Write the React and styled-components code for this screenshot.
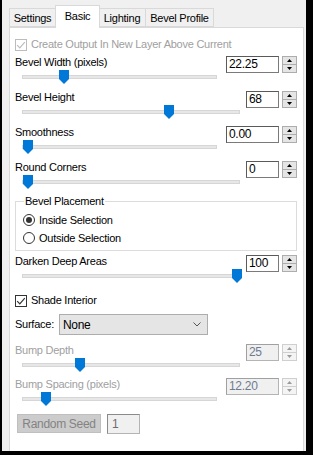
import styled, { createGlobalStyle } from "styled-components";

const Global = createGlobalStyle`
  html, body {
    margin: 0;
    padding: 0;
    background: #000;
  }
  body {
    font-family: "Liberation Sans", Arial, sans-serif;
    font-size: 11px;
    letter-spacing: -0.25px;
    color: #000;
  }
`;

const Frame = styled.div`
  width: 313px;
  height: 455px;
  box-sizing: border-box;
  background: #f0f0f0;
  border-left: 2px solid #000;
  border-right: 7px solid #000;
  border-bottom: 4px solid #000;
  display: flex;
  flex-direction: column;
`;

const Tabs = styled.div`
  display: flex;
  align-items: flex-end;
  padding: 5px 0 0 7px;
  position: relative;
  z-index: 1;
`;

const Tab = styled.div`
  width: ${(p) => p.$w}px;
  height: ${(p) => (p.$active ? 23 : 19)}px;
  box-sizing: border-box;
  display: flex;
  align-items: ${(p) => (p.$active ? "flex-start" : "center")};
  padding-top: ${(p) => (p.$active ? 4 : 0)}px;
  justify-content: center;
  background: ${(p) => (p.$active ? "#fff" : "#f0f0f0")};
  border: 1px solid #d9d9d9;
  border-bottom: ${(p) => (p.$active ? "none" : "1px solid #d9d9d9")};
  margin: 0 ${(p) => (p.$active ? -1 : 0)}px ${(p) => (p.$active ? -1 : 0)}px;
  border-left-width: ${(p) => (p.$first ? 1 : 0)}px;
  ${(p) => p.$active && "border-left-width: 1px; position: relative; z-index: 2;"}
`;

const Panel = styled.div`
  flex: 1;
  margin: 0 2px 0 7px;
  background: #fff;
  border: 1px solid #d9d9d9;
  border-bottom: none;
  padding: 0 6px 0 5px;
  display: flex;
  flex-direction: column;
`;

const CheckRow = styled.label`
  display: flex;
  align-items: center;
  gap: 4px;
  line-height: 15px;
  height: 15px;
  margin-top: ${(p) => p.$mt}px;
  color: ${(p) => (p.$disabled ? "#a0a0a0" : "#000")};
`;

const Box = styled.span`
  width: 12px;
  height: 12px;
  box-sizing: border-box;
  border: 1px solid ${(p) => (p.$disabled ? "#bcbcbc" : "#333")};
  background: #fff;
  display: flex;
  align-items: center;
  justify-content: center;
`;

const Control = styled.div`
  display: grid;
  grid-template-columns: 1fr auto;
  grid-template-rows: 15px 14px;
  margin-top: ${(p) => p.$mt}px;
`;

const Label = styled.div`
  line-height: 15px;
  color: ${(p) => (p.$disabled ? "#a0a0a0" : "#000")};
  white-space: nowrap;
`;

const SliderRow = styled.div`
  grid-row: 2;
  grid-column: 1;
  padding-left: 7px;
`;

const Track = styled.div`
  position: relative;
  width: ${(p) => p.$w}px;
  height: 4px;
  box-sizing: border-box;
  margin-top: 5px;
  background: #e7e7e7;
  border: 1px solid #d6d6d6;
`;

const Thumb = styled.svg`
  position: absolute;
  top: -6px;
  display: block;
`;

const Spin = styled.div`
  grid-column: 2;
  grid-row: 1 / span 2;
  align-self: start;
  margin-top: 1px;
  display: flex;
  gap: 3px;
`;

const SpinInput = styled.div`
  width: ${(p) => p.$w}px;
  height: 17px;
  box-sizing: border-box;
  border: 1px solid ${(p) => (p.$disabled ? "#b4b4b4" : "#7a7a7a")};
  border-top-color: ${(p) => (p.$disabled ? "#a0a0a0" : "#5a5a5a")};
  border-left-color: ${(p) => (p.$disabled ? "#a0a0a0" : "#5a5a5a")};
  background: ${(p) => (p.$disabled ? "#f0f0f0" : "#fff")};
  color: ${(p) => (p.$disabled ? "#6d7a90" : "#000")};
  font-size: 12px;
  letter-spacing: -0.3px;
  line-height: 15px;
  padding-left: 2px;
`;

const SpinButtons = styled.div`
  display: flex;
  flex-direction: column;
  width: 15px;
  height: 17px;
`;

const SpinButton = styled.div`
  flex: 1;
  box-sizing: border-box;
  border: 1px solid ${(p) => (p.$disabled ? "#cfcfcf" : "#adadad")};
  background: ${(p) => (p.$disabled ? "#f4f4f4" : "#e5e5e5")};
  display: flex;
  align-items: center;
  justify-content: center;
  & + & {
    border-top: none;
  }
`;

const Group = styled.fieldset`
  margin: ${(p) => p.$mt}px 0 0;
  padding: 2px 0 3px 7px;
  border: 1px solid #dcdcdc;
  min-width: 0;
`;

const Legend = styled.legend`
  padding: 0 1px;
  margin-left: 1px;
  line-height: 15px;
`;

const RadioRow = styled.label`
  display: flex;
  align-items: center;
  gap: 4px;
  height: 18px;
`;

const RadioDot = styled.span`
  width: 12px;
  height: 12px;
  box-sizing: border-box;
  border-radius: 50%;
  border: 1px solid #333;
  background: #fff;
  display: flex;
  align-items: center;
  justify-content: center;
  &::after {
    content: "";
    width: 6px;
    height: 6px;
    border-radius: 50%;
    background: ${(p) => (p.$checked ? "#333" : "transparent")};
  }
`;

const SurfaceRow = styled.div`
  display: flex;
  align-items: center;
  gap: 5px;
  height: 21px;
  margin-top: ${(p) => p.$mt}px;
`;

const Select = styled.div`
  width: 149px;
  height: 21px;
  box-sizing: border-box;
  border: 1px solid #adadad;
  background: #e5e5e5;
  display: flex;
  align-items: center;
  justify-content: space-between;
  padding: 0 6px 0 3px;
  font-size: 12px;
  letter-spacing: -0.3px;
`;

const ButtonRow = styled.div`
  display: flex;
  gap: 6px;
  margin: ${(p) => p.$mt}px 0 0 2px;
`;

const Button = styled.div`
  width: 84px;
  height: 19px;
  box-sizing: border-box;
  border: 1px solid #bfbfbf;
  background: #cccccc;
  color: #838383;
  font-size: 12px;
  letter-spacing: -0.3px;
  display: flex;
  align-items: center;
  justify-content: center;
`;

const SeedInput = styled.div`
  width: 33px;
  height: 20px;
  box-sizing: border-box;
  border: 1px solid #b4b4b4;
  border-top-color: #8a8a8a;
  border-left-color: #8a8a8a;
  background: #f0f0f0;
  color: #6d6d6d;
  font-size: 12px;
  line-height: 18px;
  padding-left: 4px;
`;

const Check = ({ disabled }) => (
  <Box $disabled={disabled}>
    <svg width="10" height="10" viewBox="0 0 10 10">
      <path
        d="M1.2 5.2 L3.8 7.8 L8.8 2.2"
        fill="none"
        stroke={disabled ? "#bcbcbc" : "#333"}
        strokeWidth="1.2"
      />
    </svg>
  </Box>
);

const Arrow = ({ up, disabled }) => (
  <svg width="5" height="3" viewBox="0 0 5 3">
    <path
      d={up ? "M0 3 L2.5 0 L5 3 Z" : "M0 0 L2.5 3 L5 0 Z"}
      fill={disabled ? "#9a9a9a" : "#000"}
    />
  </svg>
);

const SliderControl = ({ label, value, pos, wide, disabled, mt }) => (
  <Control $mt={mt}>
    <Label $disabled={disabled}>{label}</Label>
    <SliderRow>
      <Track $w={wide ? 195 : 218}>
        <Thumb width="10" height="14" viewBox="0 0 10 14" style={{ left: pos }}>
          <path d="M0 0 H10 V9 L5 14 L0 9 Z" fill="#0078d7" />
        </Thumb>
      </Track>
    </SliderRow>
    <Spin>
      <SpinInput $w={wide ? 53 : 33} $disabled={disabled}>
        {value}
      </SpinInput>
      <SpinButtons>
        <SpinButton $disabled={disabled}>
          <Arrow up disabled={disabled} />
        </SpinButton>
        <SpinButton $disabled={disabled}>
          <Arrow disabled={disabled} />
        </SpinButton>
      </SpinButtons>
    </Spin>
  </Control>
);

export default function App() {
  return (
    <>
      <Global />
      <Frame>
        <Tabs>
          <Tab $w={47} $first>Settings</Tab>
          <Tab $w={45} $active>Basic</Tab>
          <Tab $w={47}>Lighting</Tab>
          <Tab $w={68}>Bevel Profile</Tab>
        </Tabs>
        <Panel>
          <CheckRow $mt={9} $disabled>
            <Check disabled />
            Create Output In New Layer Above Current
          </CheckRow>
          <SliderControl mt={3} label="Bevel Width (pixels)" value="22.25" pos={36} wide />
          <SliderControl mt={6} label="Bevel Height" value="68" pos={141} />
          <SliderControl mt={6} label="Smoothness" value="0.00" pos={0} wide />
          <SliderControl mt={6} label="Round Corners" value="0" pos={0} />
          <Group $mt={5}>
            <Legend>Bevel Placement</Legend>
            <RadioRow>
              <RadioDot $checked />
              Inside Selection
            </RadioRow>
            <RadioRow>
              <RadioDot />
              Outside Selection
            </RadioRow>
          </Group>
          <SliderControl mt={3} label="Darken Deep Areas" value="100" pos={209} />
          <CheckRow $mt={10}>
            <Check />
            Shade Interior
          </CheckRow>
          <SurfaceRow $mt={6}>
            <Label>Surface:</Label>
            <Select>
              None
              <svg width="8" height="5" viewBox="0 0 8 5">
                <path d="M0.5 0.5 L4 4 L7.5 0.5" fill="none" stroke="#555" />
              </svg>
            </Select>
          </SurfaceRow>
          <SliderControl mt={8} label="Bump Depth" value="25" pos={52} disabled />
          <SliderControl mt={5} label="Bump Spacing (pixels)" value="12.20" pos={18} wide disabled />
          <ButtonRow $mt={8}>
            <Button>Random Seed</Button>
            <SeedInput>1</SeedInput>
          </ButtonRow>
        </Panel>
      </Frame>
    </>
  );
}
